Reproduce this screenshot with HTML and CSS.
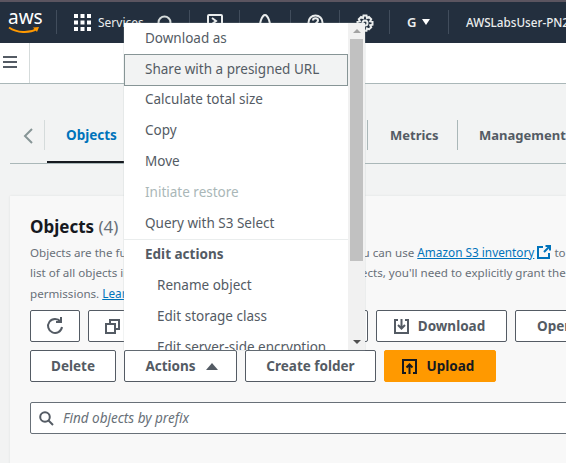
FILE: index.html
```html
<!DOCTYPE html>
<html>
<head>
	<meta charset="utf-8">
	<meta name="viewport" content="width=device-width, initial-scale=1">
	<title>Objects</title>
	<link rel="stylesheet" href="styles.css">
</head>
<body>
	<div class="page">
		<header class="topbar">
			<div class="logo">
				<span class="logo-text">aws</span>
				<svg width="32" height="9" viewBox="0 0 32 9"><path d="M1 1.500C9 7 21 7.500 29 3" fill="none" stroke="#f90" stroke-width="2"/><path d="M25 1.500l6-.5-2 5z" fill="#f90"/></svg>
			</div>
			<div class="top-sep sep-logo"></div>
			<div class="services">
				<svg width="17" height="17" viewBox="0 0 17 17" fill="#fff"><rect width="4" height="4"/><rect x="6.500" width="4" height="4"/><rect x="13" width="4" height="4"/><rect y="6.500" width="4" height="4"/><rect x="6.500" y="6.500" width="4" height="4"/><rect x="13" y="6.500" width="4" height="4"/><rect y="13" width="4" height="4"/><rect x="6.500" y="13" width="4" height="4"/><rect x="13" y="13" width="4" height="4"/></svg>
				<span>Services</span>
			</div>
			<svg class="top-icon search-top" width="17" height="17" viewBox="0 0 17 17" fill="none" stroke="#d5dbdb" stroke-width="2"><circle cx="7.500" cy="7.500" r="6"/><path d="M12 12l4 4"/></svg>
			<div class="top-sep sep-a"></div>
			<svg class="top-icon term-top" width="16" height="16" viewBox="0 0 16 16" fill="none" stroke="#eaeded" stroke-width="2"><rect x="1" y="1" width="14" height="14" rx="1"/><path d="M5 4l4 3-4 3"/></svg>
			<div class="top-sep sep-b"></div>
			<svg class="top-icon bell-top" width="18" height="18" viewBox="0 0 18 18" fill="none" stroke="#eaeded" stroke-width="2"><path d="M2 15c2-3 2-6 3-9s3-5 4-5 3 2 4 5 1 6 3 9z"/></svg>
			<div class="top-sep sep-bell"></div>
			<svg class="top-icon help-top" width="17" height="17" viewBox="0 0 17 17" fill="none" stroke="#eaeded" stroke-width="2"><circle cx="8.500" cy="8.500" r="7"/><path d="M6 6.500c0-3 5-3 5 0 0 2-2.500 2-2.500 4M8.500 12v1.500"/></svg>
			<div class="top-sep sep-c"></div>
			<svg class="top-icon gear-top" width="18" height="18" viewBox="0 0 18 18" fill="none" stroke="#eaeded" stroke-width="2"><circle cx="9" cy="9" r="2.500"/><path d="M7.500 1.500h3l.5 2.500 2-1 2.200 2.200-1 2 2.300.5v3l-2.300.5 1 2-2.200 2.200-2-1-.5 2.300h-3L7 14.400l-2 1-2.200-2.200 1-2-2.300-.5v-3L3.800 7.200l-1-2L5 3l2 1z"/></svg>
			<div class="top-sep sep-d"></div>
			<div class="region">G <span class="caret-down"></span></div>
			<div class="top-sep sep-e"></div>
			<div class="user">AWSLabsUser-PN2</div>
		</header>

		<div class="subbar">
			<div class="burger"><span></span><span></span><span></span></div>
		</div>

		<main class="content">
			<div class="tabs">
				<svg class="tab-back" width="10" height="16" viewBox="0 0 10 16" fill="none" stroke="#879596" stroke-width="2"><path d="M9 1L2 8l7 7"/></svg>
				<div class="tab tab-active">Objects</div>
				<div class="tab tab-metrics">Metrics</div>
				<div class="tab tab-mgmt">Management</div>
			</div>

			<section class="card">
				<h2 class="card-title">Objects <span class="count">(4)</span></h2>
				<p class="card-desc">Objects are the fundamental entities stored in Amazon S3. You can use <a href="#">Amazon S3 inventory</a> <svg class="ext" width="14" height="14" viewBox="0 0 14 14" fill="none" stroke="#0073bb" stroke-width="2"><path d="M6 2H1v11h11V8"/><path d="M7 7l6-6M8.500 1H13v4.500"/></svg> to get a<br>list of all objects in your bucket. For others to access your objects, you'll need to explicitly grant them<br>permissions. <a href="#">Learn more</a></p>

				<div class="btn-row">
					<button class="btn btn-refresh"><svg width="20" height="18" viewBox="0 0 20 18" fill="none" stroke="#545b64" stroke-width="2"><path d="M15.500 4.500A7 7 0 1 0 17 10"/><path d="M16 0v5h-5"/></svg></button>
					<button class="btn btn-copy"><svg width="15" height="15" viewBox="0 0 15 15" fill="none" stroke="#545b64" stroke-width="2"><rect x="1" y="5" width="9" height="9"/><path d="M5 4V1h9v9h-3"/></svg></button>
					<button class="btn btn-hidden"></button>
					<button class="btn btn-download"><svg width="15" height="15" viewBox="0 0 15 15" fill="none" stroke="#545b64" stroke-width="2"><path d="M4 1H1v13h13V1h-3"/><path d="M7.500 0v9M4 6l3.500 3.500L11 6"/></svg>Download</button>
					<button class="btn btn-open">Open</button>
				</div>
				<div class="btn-row">
					<button class="btn btn-delete">Delete</button>
					<button class="btn btn-actions">Actions <span class="caret-up"></span></button>
					<button class="btn btn-create">Create folder</button>
					<button class="btn btn-upload"><svg width="15" height="15" viewBox="0 0 15 15" fill="none" stroke="#16191f" stroke-width="2"><path d="M4 14H1V1h13v13h-3"/><path d="M7.500 15V6M4.500 8.500l3-3 3 3"/></svg>Upload</button>
				</div>
				<div class="search">
					<svg width="15" height="15" viewBox="0 0 15 15" fill="none" stroke="#545b64" stroke-width="2"><circle cx="6" cy="6" r="4.800"/><path d="M9.500 9.500l4.500 4.500"/></svg>
					<span>Find objects by prefix</span>
				</div>
			</section>
		</main>

		<div class="menu">
			<ul class="menu-list">
				<li class="item-first">Download as</li>
				<li class="item-hover">Share with a presigned URL</li>
				<li>Calculate total size</li>
				<li>Copy</li>
				<li>Move</li>
				<li class="item-off">Initiate restore</li>
				<li class="item-last">Query with S3 Select</li>
				<li class="item-head">Edit actions</li>
				<li class="item-sub">Rename object</li>
				<li class="item-sub">Edit storage class</li>
				<li class="item-sub">Edit server-side encryption</li>
			</ul>
			<div class="scroll">
				<span class="arrow-up"></span>
				<div class="thumb"></div>
				<span class="arrow-down"></span>
			</div>
		</div>
	</div>
</body>
</html>
```
FILE: styles.css
```css
* {
	box-sizing: border-box;
}
html, body {
	margin: 0;
	height: 100%;
	overflow: hidden;
}
body {
	font-family: "Noto Sans", "Open Sans", sans-serif;
	color: #16191f;
	background: #f2f3f3;
}
.page {
	position: relative;
	width: 566px;
	height: 463px;
	overflow: hidden;
}

/* top bar */
.topbar {
	position: relative;
	height: 43px;
	background: #232f3e;
	border-top: 2px solid #5b5560;
	color: #fff;
}
.logo {
	position: absolute;
	left: 8px;
	top: 6px;
	width: 32px;
}
.logo-text {
	display: block;
	font-size: 19px;
	line-height: 18px;
	color: #fff;
	text-align: center;
}
.logo svg {
	display: block;
}
.services {
	position: absolute;
	left: 74px;
	top: 12px;
	display: flex;
	align-items: center;
	gap: 7px;
	font-size: 12px;
	color: #eaeded;
}
.top-icon {
	position: absolute;
}
.search-top { left: 157px; top: 13px; }
.term-top { left: 207px; top: 12px; }
.bell-top { left: 256px; top: 12px; }
.help-top { left: 307px; top: 12px; }
.gear-top { left: 356px; top: 12px; }
.top-sep {
	position: absolute;
	top: 8px;
	width: 1px;
	height: 24px;
	background: #414d5c;
}
.sep-logo { left: 56px; }
.sep-a { left: 189px; }
.sep-b { left: 239px; }
.sep-bell { left: 290px; }
.sep-c { left: 339px; }
.sep-d { left: 389px; }
.sep-e { left: 448px; }
.region {
	position: absolute;
	left: 407px;
	top: 11px;
	font-size: 13px;
	font-weight: 600;
	color: #eaeded;
	display: flex;
	align-items: center;
	gap: 6px;
}
.caret-down {
	width: 0;
	height: 0;
	border-left: 4px solid transparent;
	border-right: 4px solid transparent;
	border-top: 6px solid #fff;
}
.user {
	position: absolute;
	left: 466px;
	top: 12px;
	font-size: 11.7px;
	font-weight: 500;
	color: #eaeded;
	white-space: nowrap;
}

/* sub bar */
.subbar {
	height: 41px;
	background: #fff;
	border-bottom: 1px solid #aab7b8;
	display: flex;
}
.burger {
	width: 30px;
	border-right: 1px solid #d5dbdb;
	display: flex;
	flex-direction: column;
	justify-content: center;
	gap: 3px;
	padding-left: 3px;
	padding-bottom: 3px;
}
.burger span {
	display: block;
	width: 14px;
	height: 2px;
	background: #545b64;
}

/* tabs */
.content {
	padding: 36px 0 0 10px;
}
.tabs {
	position: relative;
	height: 44px;
	border-bottom: 1px solid #aab7b8;
	white-space: nowrap;
}
.tab-back {
	position: absolute;
	left: 13px;
	top: 8px;
}
.tab {
	position: absolute;
	top: 0;
	height: 30px;
	line-height: 30px;
	font-size: 13px;
	font-weight: 700;
	color: #545b64;
	border-left: 1px solid #aab7b8;
}
.tab-active {
	left: 34px;
	padding-left: 21px;
	width: 120px;
	font-size: 13.5px;
	color: #0073bb;
	border-left-color: #d5dbdb;
}
.tab-active::after {
	content: "";
	position: absolute;
	left: 2px;
	right: 0;
	top: 41px;
	height: 2px;
	background: #16191f;
}
.tab-metrics {
	left: 357px;
	padding-left: 22px;
}
.tab-mgmt {
	left: 447px;
	padding-left: 21px;
}

/* card */
.card {
	margin-top: 32px;
	height: 280px;
	background: #f8f8f8;
	padding: 18px 0 0 20px;
	box-shadow: 0 0 2px #dde0e0;
	white-space: nowrap;
}
.card-title {
	margin: 0;
	font-size: 17px;
	line-height: 26px;
	font-weight: 700;
	color: #16191f;
}
.count {
	font-weight: 400;
	color: #687078;
}
.card-desc {
	margin: 2px 0 8px;
	height: 60px;
	font-size: 11.6px;
	line-height: 20px;
	color: #687078;
}
.card-desc a {
	font-size: 11.8px;
	color: #0073bb;
	text-decoration: underline;
}
.ext {
	vertical-align: -2px;
}

/* buttons */
.btn-row {
	display: flex;
	gap: 8px;
	margin-bottom: 8px;
}
.btn {
	flex: none;
	height: 32px;
	padding: 0;
	background: #fff;
	border: 1px solid #545b64;
	border-radius: 2px;
	font-family: inherit;
	font-size: 13.5px;
	font-weight: 700;
	color: #545b64;
	display: flex;
	align-items: center;
	justify-content: center;
	gap: 10px;
}
.btn-refresh { width: 50px; }
.btn-copy { width: 48px; }
.btn-hidden { width: 224px; }
.btn-download { width: 131px; gap: 9px; padding-right: 4px; }
.btn-open { width: 70px; justify-content: flex-start; padding-left: 21px; }
.btn-delete { width: 86px; }
.btn-actions { width: 113px; padding-left: 2px; }
.btn-create { width: 131px; }
.btn-upload {
	width: 112px;
	background: #f90;
	border-color: #f90;
	color: #16191f;
	padding-right: 4px;
}
.caret-up {
	width: 0;
	height: 0;
	border-left: 6px solid transparent;
	border-right: 6px solid transparent;
	border-bottom: 7px solid #545b64;
}

/* search */
.search {
	margin-top: 20px;
	height: 32px;
	width: 560px;
	background: #fff;
	border: 1px solid #687078;
	border-radius: 2px;
	display: flex;
	align-items: center;
	gap: 9px;
	padding-left: 8px;
	font-size: 13.5px;
	font-style: italic;
	color: #687078;
}

/* dropdown */
.menu {
	position: absolute;
	left: 124px;
	top: 23px;
	width: 241px;
	height: 327px;
	background: #fff;
	box-shadow: 0 0 1px #aab7b8;
	overflow: hidden;
	display: flex;
}
.menu-list {
	list-style: none;
	margin: 0;
	padding: 0;
	width: 224px;
	font-size: 13.5px;
	color: #545b64;
}
.menu-list li {
	height: 31px;
	line-height: 29px;
	padding-left: 21px;
	white-space: nowrap;
}
.menu-list .item-first {
	line-height: 31px;
}
.menu-list .item-hover {
	height: 32px;
	background: #f2f3f3;
	border: 1px solid #879596;
	padding-left: 20px;
	line-height: 29px;
	margin-bottom: -1px;
}
.menu-list .item-off {
	color: #aab7b8;
}
.menu-list .item-last {
	border-bottom: 1px solid #eaeded;
}
.menu-list .item-head {
	font-weight: 700;
}
.menu-list .item-sub {
	padding-left: 33px;
}
.scroll {
	position: relative;
	flex: none;
	width: 17px;
	background: #f1f1f1;
}
.thumb {
	position: absolute;
	left: 2px;
	right: 2px;
	top: 16px;
	height: 222px;
	background: #c1c1c1;
}
.arrow-up, .arrow-down {
	position: absolute;
	left: 5px;
	width: 0;
	height: 0;
	border-left: 4px solid transparent;
	border-right: 4px solid transparent;
}
.arrow-up {
	top: 6px;
	border-bottom: 4px solid #a3a3a3;
}
.arrow-down {
	bottom: 6px;
	border-top: 4px solid #505050;
}
```
